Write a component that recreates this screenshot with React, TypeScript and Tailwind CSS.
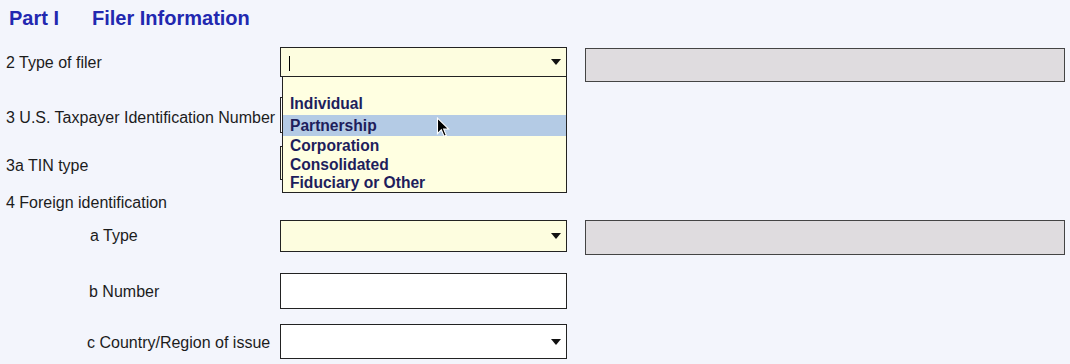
const font = { fontFamily: '"Liberation Sans", Arial, sans-serif' };

const Arrow = () => (
  <svg width="10" height="6" viewBox="0 0 10 6" className="absolute right-[5px] top-1/2 -translate-y-1/2">
    <path d="M0 0 H10 L5 6 Z" fill="#111" />
  </svg>
);

const Pointer = () => (
  <svg width="14" height="21" viewBox="0 0 12 19" className="absolute left-[153px] top-[2px]">
    <path d="M1 1 V15 L4.5 11.5 L7 17.5 L9 16.6 L6.6 10.8 H11 Z" fill="#000" stroke="#fff" strokeWidth="1" />
  </svg>
);

const options = ["Individual", "Partnership", "Corporation", "Consolidated", "Fiduciary or Other"];

export default function App() {
  return (
    <div className="relative w-[1070px] h-[364px] bg-[#f3f5fc] text-[#1c1c1c] overflow-hidden" style={font}>
      {/* heading */}
      <div className="flex h-[47px] pt-[6px] text-[20px] font-bold text-[#2228b0] leading-[24px]">
        <span className="pl-[9px] w-[92px]">Part I</span>
        <span>Filer Information</span>
      </div>

      {/* 2 Type of filer */}
      <div className="flex items-start h-[36px] text-[16px] leading-4">
        <div className="w-[280px] pl-[6px] mt-[8px]">2 Type of filer</div>
        <div className="relative w-[287px] h-[30px] border border-[#222] bg-[#fdfddf]">
          <span className="absolute left-[8px] top-[8px] w-px h-[15px] bg-black" />
          <Arrow />
        </div>
        <div className="ml-[18px] mt-[1px] w-[480px] h-[34px] border border-[#444] bg-[#dfdcdf]" />
      </div>

      {/* 3 TIN */}
      <div className="flex items-start h-[59px] text-[16px] leading-4">
        <div className="w-[280px] pl-[6px] mt-[27px]">3 U.S. Taxpayer Identification Number</div>
        <div className="mt-[14px] w-[287px] h-[36px] border border-[#222] bg-white" />
      </div>

      {/* 3a */}
      <div className="flex items-start h-[43px] text-[16px] leading-4">
        <div className="w-[280px] pl-[6px] mt-[16px]">3a TIN type</div>
        <div className="mt-[4px] w-[287px] h-[34px] border border-[#222] bg-[#fdfddf]" />
      </div>

      {/* 4 */}
      <div className="h-[35px] text-[16px] leading-4 pl-[6px] pt-[10px]">4 Foreign identification</div>

      {/* a Type */}
      <div className="flex items-start h-[53px] text-[16px] leading-4">
        <div className="w-[280px] pl-[90px] mt-[8px]">a Type</div>
        <div className="relative w-[287px] h-[32px] border border-[#222] bg-[#fdfddf]">
          <Arrow />
        </div>
        <div className="ml-[18px] w-[480px] h-[35px] border border-[#444] bg-[#dfdcdf]" />
      </div>

      {/* b Number */}
      <div className="flex items-start h-[51px] text-[16px] leading-4">
        <div className="w-[280px] pl-[89px] mt-[11px]">b Number</div>
        <div className="w-[287px] h-[36px] border border-[#222] bg-white" />
      </div>

      {/* c Country */}
      <div className="flex items-start h-[40px] text-[16px] leading-4">
        <div className="w-[280px] pl-[87px] mt-[11px]">c Country/Region of issue</div>
        <div className="relative w-[287px] h-[35px] border border-[#222] bg-white">
          <Arrow />
        </div>
      </div>

      {/* open dropdown list */}
      <div className="absolute left-[282px] top-[76px] w-[285px] border border-[#222] bg-[#ffffe1] pt-[16px] text-[15.6px] leading-[18px] font-bold text-[#1e1e5c]">
        {options.map((o, i) => (
          <div
            key={o}
            className={
              "relative px-[7px] flex items-center " +
              (i === 0 ? "h-[22px] " : i === 1 ? "h-[21px] bg-[#b4cbe5] " : i === 4 ? "h-[18px] " : "h-[19px] ")
            }
          >
            {o}
            {i === 1 && <Pointer />}
          </div>
        ))}
      </div>
    </div>
  );
}
